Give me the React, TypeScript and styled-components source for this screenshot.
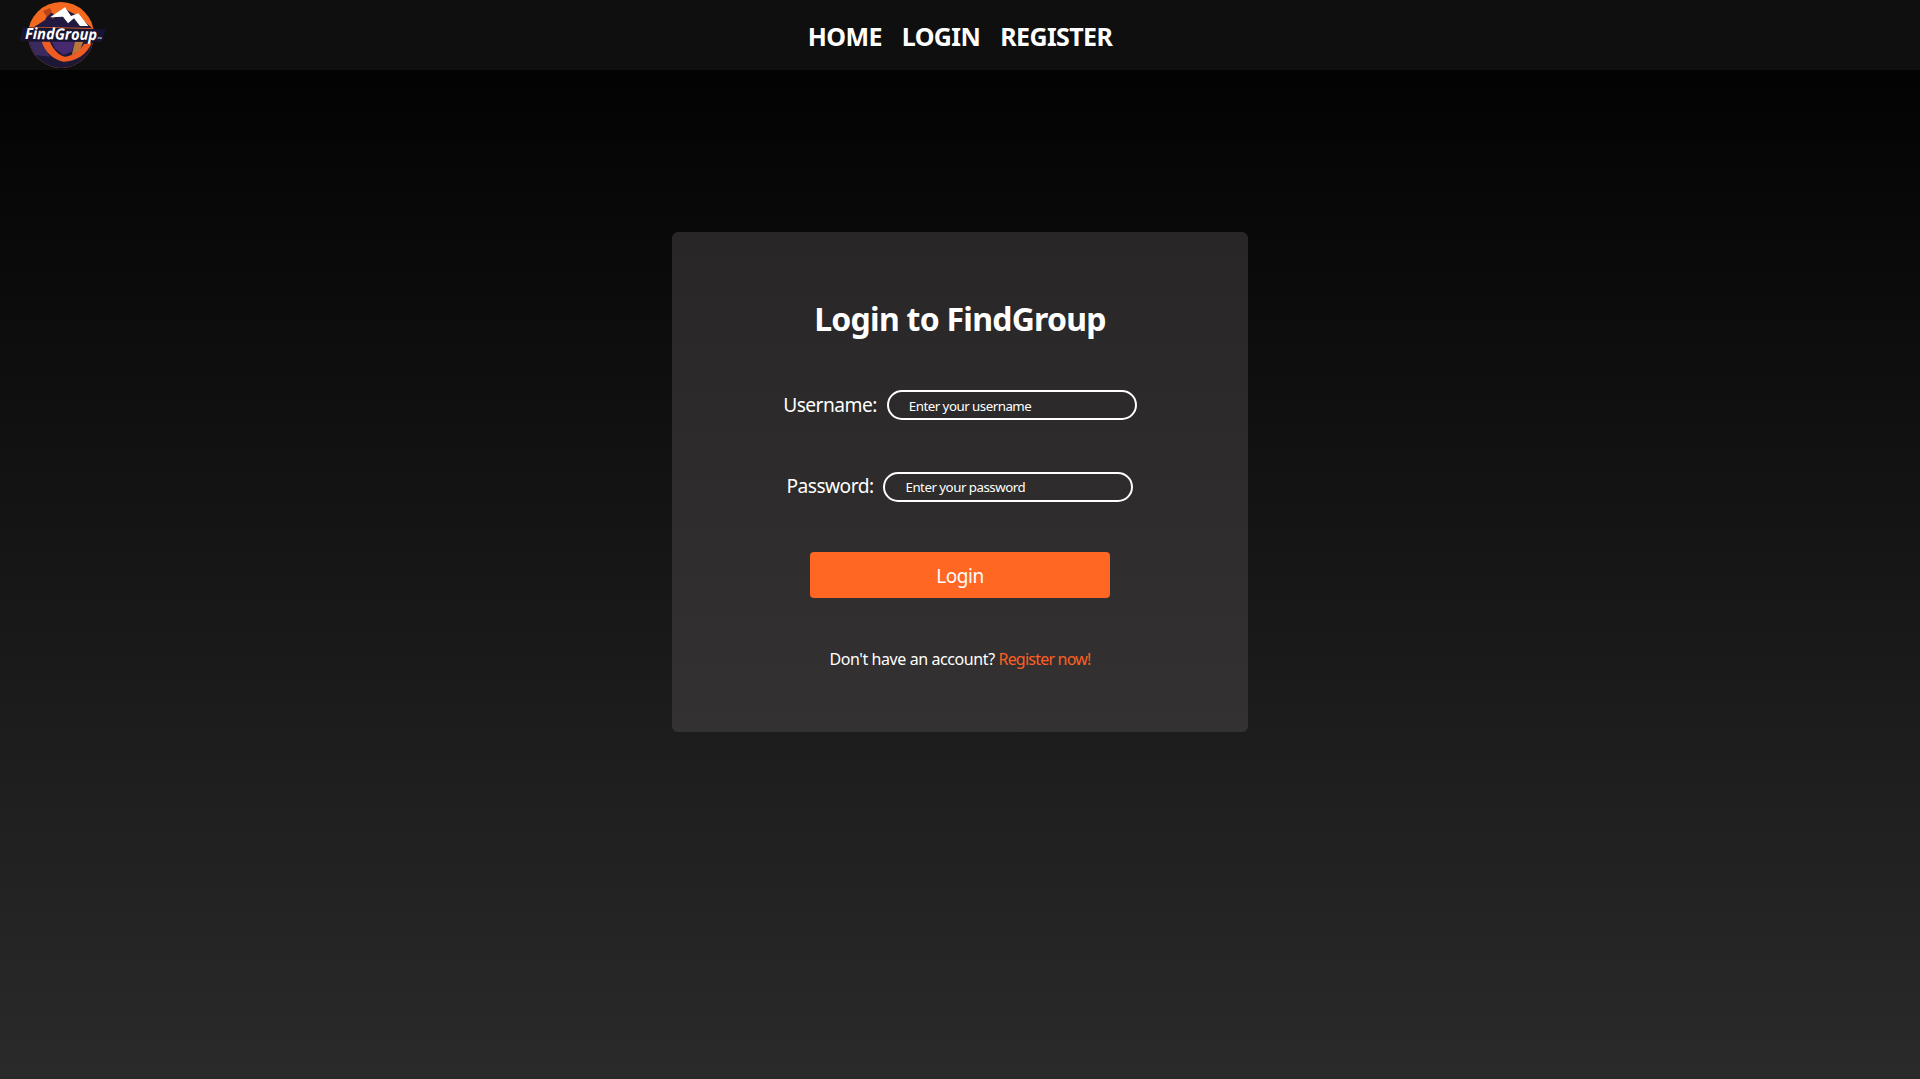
import React from "react";
import styled, { createGlobalStyle } from "styled-components";

const Global = createGlobalStyle`
  html, body { margin: 0; padding: 0; height: 100%; }
  body { font-family: "Noto Sans", "Open Sans", "Liberation Sans", sans-serif; background: #000; color: #fff; }
  input::placeholder { color: #fff; opacity: 1; }
`;

const Page = styled.div`
  height: 1079px;
  overflow: hidden;
  display: flex;
  flex-direction: column;
  background: linear-gradient(180deg, #000000 0%, #2a2a2a 100%);
`;

const Header = styled.header`
  height: 70px;
  flex: none;
  background: #0f0f0f;
  position: relative;
  display: flex;
  justify-content: center;
  align-items: center;
`;

const LogoWrap = styled.a`
  position: absolute;
  left: 18px;
  top: 0;
  width: 92px;
  height: 70px;
  display: block;
`;

const Nav = styled.nav`
  display: flex;
  gap: 20px;
  padding-top: 2px;
`;

const NavLink = styled.a`
  color: #fff;
  font-size: 25px;
  font-weight: 700;
  letter-spacing: -0.6px;
  line-height: 34px;
  text-decoration: none;
`;

const Main = styled.main`
  flex: 1;
  display: flex;
  justify-content: center;
  padding-top: 162px;
`;

const Card = styled.section`
  width: 576px;
  height: 500px;
  box-sizing: border-box;
  background: linear-gradient(180deg, #282626 0%, #333131 100%);
  border-radius: 6px;
  display: flex;
  flex-direction: column;
  align-items: center;
  padding-top: 65px;
`;

const Title = styled.h1`
  margin: 0 0 49px;
  font-size: 32px;
  line-height: 44px;
  font-weight: 700;
  letter-spacing: -0.75px;
  color: #fff;
`;

const Field = styled.div<{ $gapBelow: number }>`
  display: flex;
  align-items: center;
  gap: 10px;
  height: 30px;
  margin-bottom: ${(p) => p.$gapBelow}px;
`;

const Label = styled.label<{ $lift?: boolean }>`
  font-size: 19.2px;
  line-height: 26px;
  letter-spacing: -0.55px;
  color: #fff;
  margin-bottom: ${(p) => (p.$lift ? 3 : 0)}px;
`;

const Input = styled.input<{ $lift?: boolean }>`
  width: 250px;
  height: 30px;
  box-sizing: border-box;
  background: transparent;
  border: 2px solid #fff;
  border-radius: 15px;
  padding: ${(p) => (p.$lift ? 0 : 2)}px 19px 0 20px;
  color: #fff;
  font-family: inherit;
  font-size: 13.3px;
  letter-spacing: -0.5px;
  outline: none;
`;

const Submit = styled.button`
  width: 300px;
  height: 46px;
  border: 0;
  border-radius: 4px;
  background: #ff6723;
  color: #fff;
  font-family: inherit;
  font-size: 19px;
  letter-spacing: -0.5px;
  padding: 1px 0 0;
`;

const Footnote = styled.p`
  margin: 50px 0 0;
  font-size: 16px;
  line-height: 22px;
  letter-spacing: -0.41px;
  color: #fff;
`;

const Accent = styled.a`
  color: #ff5f22;
  text-decoration: none;
  letter-spacing: -0.78px;
`;

const Logo = () => (
  <svg width="92" height="70" viewBox="0 0 92 70" aria-label="FindGroup logo">
    <defs>
      <clipPath id="disc">
        <circle cx="43" cy="35" r="33" />
      </clipPath>
    </defs>
    <circle cx="43" cy="35" r="33" fill="#f4691f" />
    <g clipPath="url(#disc)">
      <rect x="8" y="40" width="72" height="30" fill="#1d1838" />
      <path d="M10.3 41.7 L23.7 41.7 L32 56.7 L17 55 Z" fill="#3a2a5e" />
      <path d="M23.7 41.7 C27 52 36 60 45.3 61.7 C58 62 69 54 73.7 43.3 L66 44 C62 50 55 56 47 56.7 C40 55 35 49 32 41.7 Z" fill="#ee5c22" />
      <path d="M33.7 41.7 L57 41.7 L53.7 51.7 L45.3 55 L37 48.3 Z" fill="#46296f" />
      <path d="M57 41.7 L65.3 41.7 L62 50 L53.7 55 Z" fill="#b9773c" />
    </g>
    <path d="M16 27 L27 20 L31 12 L36 14 L34 19 L47 9 L60 16 L74 28 Z" fill="#221a42" />
    <path d="M25 11 L32 8 L34 12 L29 17 Z" fill="#b8431b" />
    <path d="M32 17.3 L47 7.3 L53 16 L60.3 13.3 L70.3 26 L62 26 L56 18.3 L50 23.3 L45 16.7 Z" fill="#ffffff" />
    <polygon points="4.7,27.3 88,29.3 83.7,41.7 2,40.7" fill="#181433" />
    <text x="7" y="39" fontFamily="'Open Sans', sans-serif" fontStyle="italic" fontWeight="700" fontSize="15.5" textLength="72" lengthAdjust="spacingAndGlyphs" fill="#ffffff" transform="rotate(0.8 7 39)">FindGroup</text>
    <text x="79" y="39" fontFamily="'Open Sans', sans-serif" fontWeight="700" fontSize="3.5" fill="#d8d8e0">.ru</text>
  </svg>
);

export default function App() {
  return (
    <>
      <Global />
      <Page>
        <Header>
          <LogoWrap href="#"><Logo /></LogoWrap>
          <Nav>
            <NavLink href="#">HOME</NavLink>
            <NavLink href="#">LOGIN</NavLink>
            <NavLink href="#">REGISTER</NavLink>
          </Nav>
        </Header>
        <Main>
          <Card>
            <Title>Login to FindGroup</Title>
            <Field $gapBelow={52}>
              <Label htmlFor="username">Username:</Label>
              <Input id="username" placeholder="Enter your username" />
            </Field>
            <Field $gapBelow={50}>
              <Label htmlFor="password" $lift>Password:</Label>
              <Input id="password" placeholder="Enter your password" $lift />
            </Field>
            <Submit>Login</Submit>
            <Footnote>
              Don't have an account? <Accent href="#">Register now!</Accent>
            </Footnote>
          </Card>
        </Main>
      </Page>
    </>
  );
}
